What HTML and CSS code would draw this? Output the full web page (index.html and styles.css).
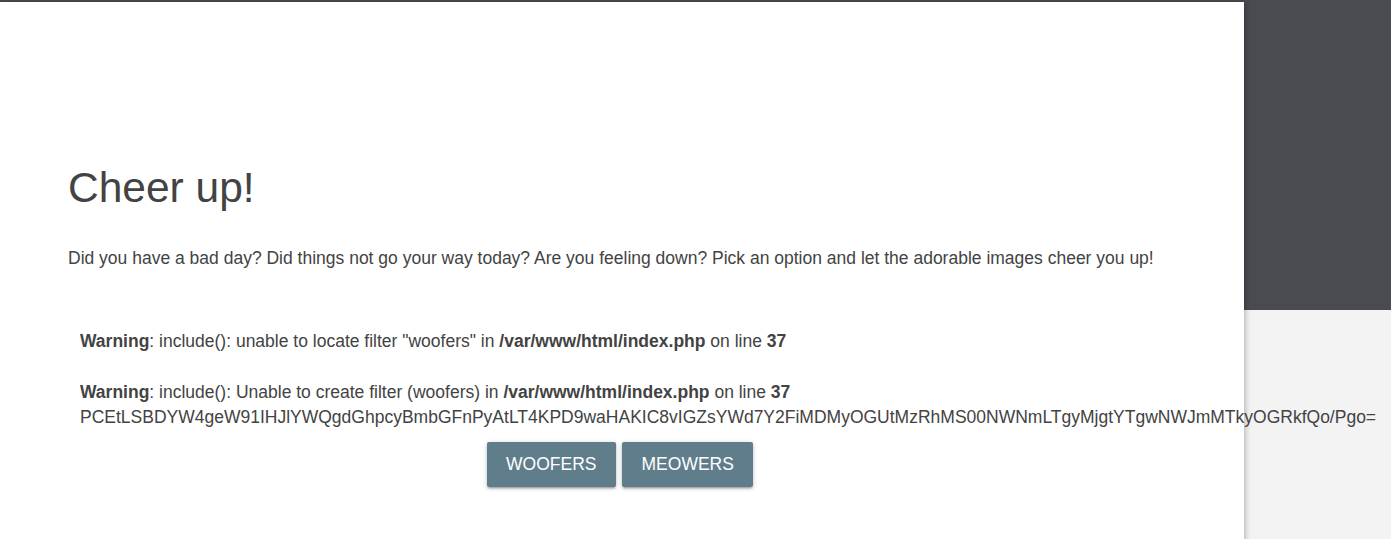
FILE: index.html
```html
<!DOCTYPE html>
<html lang="en">
  <head>
    <meta charset="UTF-8" />
    <meta name="viewport" content="width=device-width, initial-scale=1.0" />
    <title>Cheer up!</title>
    <link rel="stylesheet" href="styles.css">
  </head>
  <body>
    <div class="card">
      <h3>Cheer up!</h3>
      <p class="intro">
        Did you have a bad day? Did things not go your way today? Are you feeling down? Pick an option and let the adorable images cheer you up!
      </p>
      <div class="output">
        <b>Warning</b>: include(): unable to locate filter "woofers" in <b>/var/www/html/index.php</b> on line <b>37</b><br />
        <br />
        <b>Warning</b>: include(): Unable to create filter (woofers) in <b>/var/www/html/index.php</b> on line <b>37</b><br />
        PCEtLSBDYW4geW91IHJlYWQgdGhpcyBmbGFnPyAtLT4KPD9waHAKIC8vIGZsYWd7Y2FiMDMyOGUtMzRhMS00NWNmLTgyMjgtYTgwNWJmMTkyOGRkfQo/Pgo=
      </div>
      <form class="choices">
        <button type="button" class="btn">Woofers</button>
        <button type="button" class="btn">Meowers</button>
      </form>
    </div>
  </body>
</html>
```

FILE: styles.css
```css
body {
  margin: 0;
  font-family: "Liberation Sans", Arial, sans-serif;
  color: #434343;
  background: linear-gradient(#4a4b50 0, #4a4b50 310px, #f3f3f3 310px);
  min-height: 100vh;
  overflow: hidden;
}
.card {
  width: 1244px;
  box-sizing: border-box;
  margin-top: 2px;
  min-height: 600px;
  padding: 163px 68px 0;
  background: #ffffff;
  box-shadow: 2px 0 5px rgba(0, 0, 0, 0.22);
}
h3 {
  margin: 0;
  font-size: 42.5px;
  font-weight: 400;
  line-height: 1.1;
}
.intro {
  margin: 34px 0 0;
  font-size: 17.5px;
  line-height: 24px;
}
.output {
  margin-top: 59px;
  padding-left: 12px;
  font-size: 17.5px;
  line-height: 25.4px;
  white-space: nowrap;
}
.choices {
  display: flex;
  justify-content: center;
  gap: 6px;
  margin-top: 12px;
  margin-right: -64px;
  margin-left: -68px;
}
.btn {
  height: 45px;
  padding: 0 19.5px;
  border: none;
  border-radius: 2px;
  background-color: #607d8b;
  color: #ffffff;
  font-family: "Liberation Sans", Arial, sans-serif;
  font-size: 17.5px;
  text-transform: uppercase;
  cursor: pointer;
  box-shadow: 0 2px 2px rgba(0, 0, 0, 0.14), 0 3px 1px -2px rgba(0, 0, 0, 0.12), 0 1px 5px rgba(0, 0, 0, 0.2);
}
```
